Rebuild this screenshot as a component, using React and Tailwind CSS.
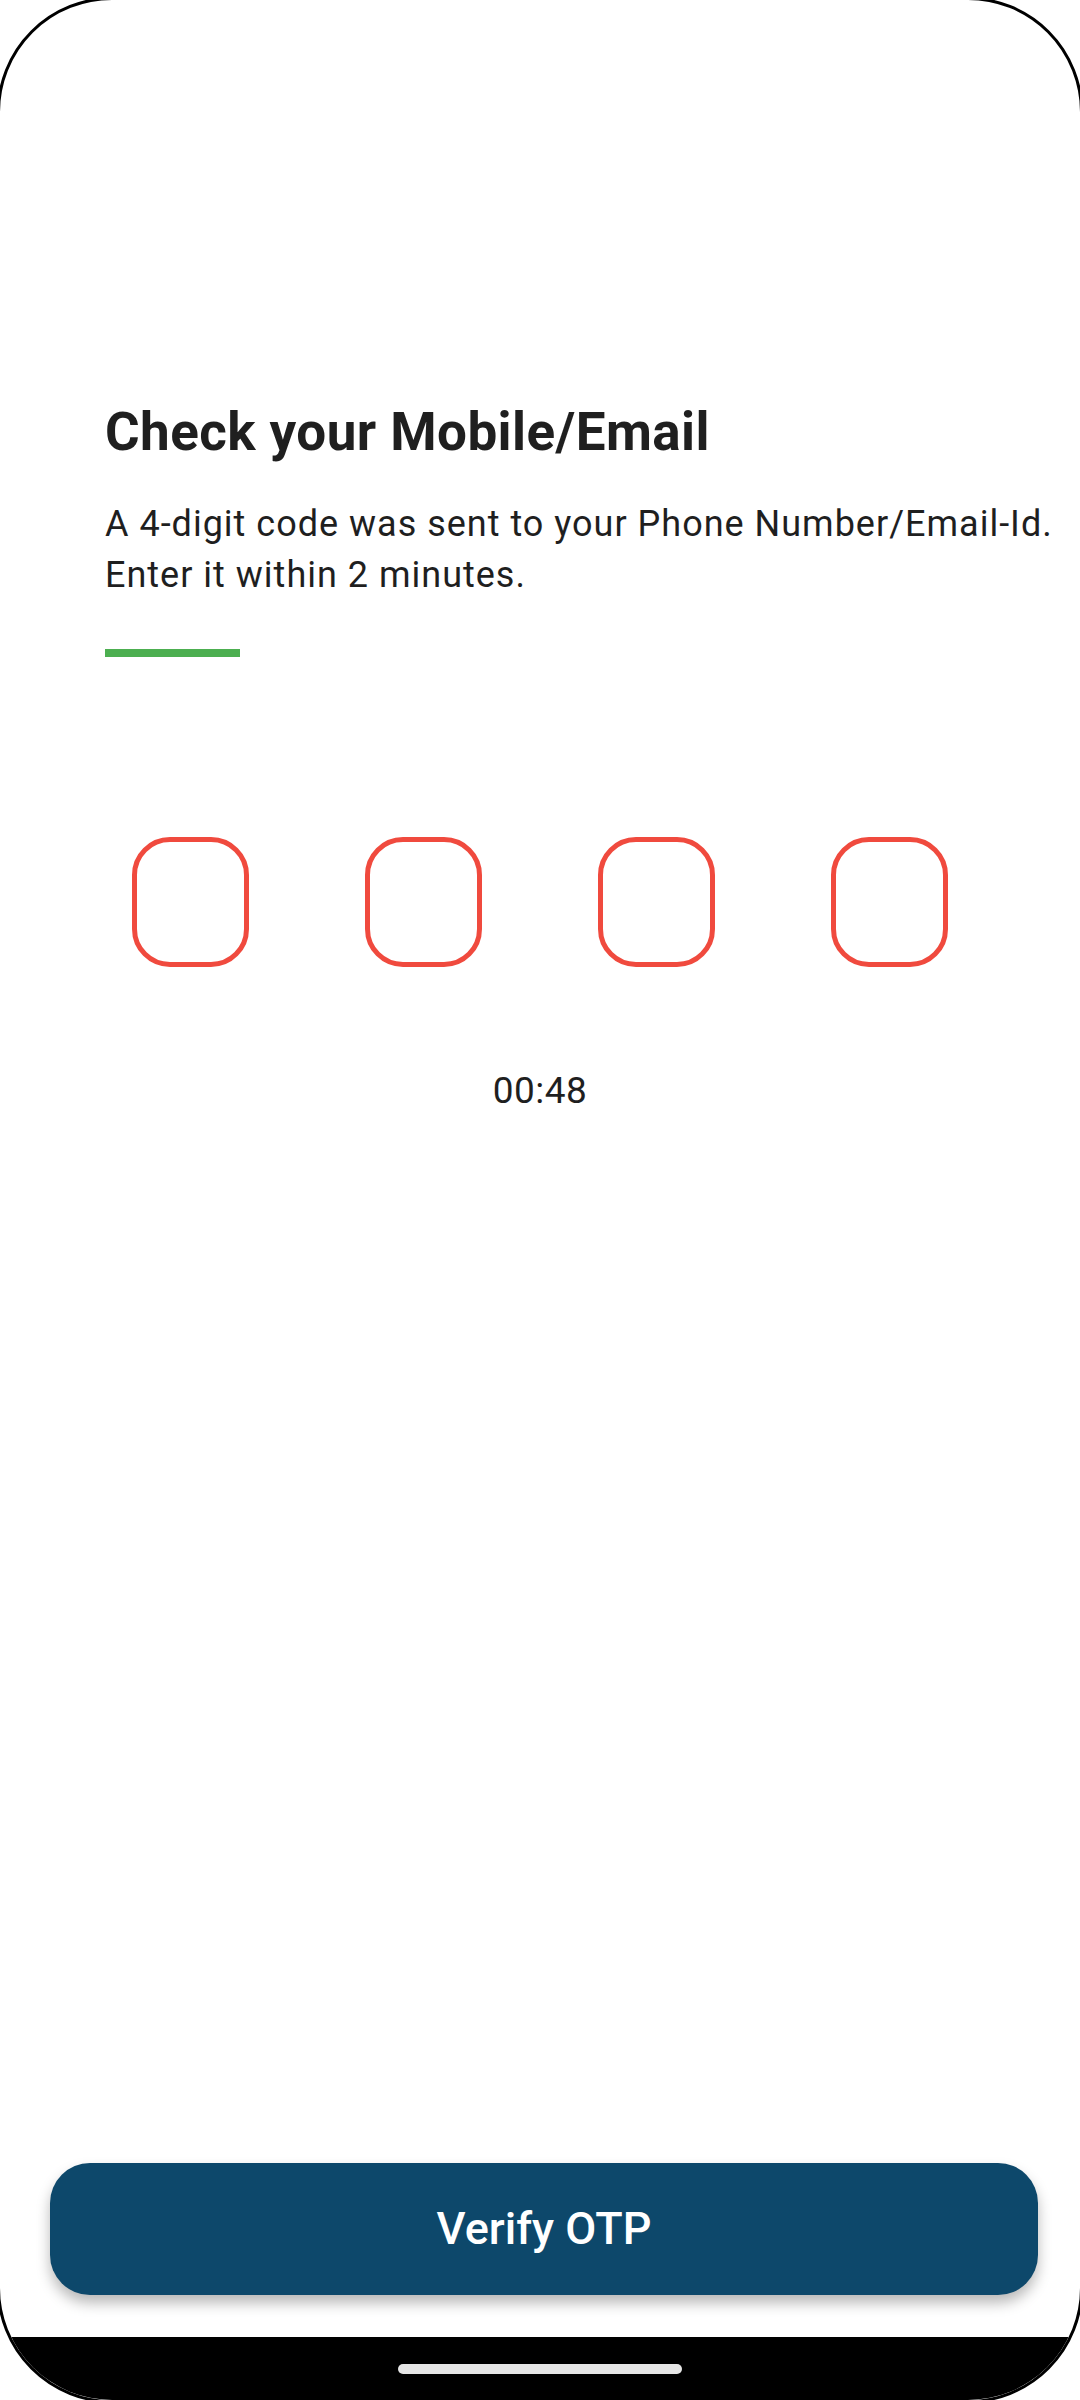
export default function App() {
  return (
    <div className="w-[1080px] h-[2400px] bg-white overflow-hidden font-[family-name:Roboto,sans-serif]">
      <div className="-m-[3px] w-[1086px] h-[2406px] rounded-[115px] border-[3px] border-black overflow-hidden flex flex-col bg-white">
        <div className="flex-1 flex flex-col pt-[402px] px-[105px]">
          <h1 className="text-[53px] leading-[60px] font-bold text-[#1f1f1f] tracking-[0.008em] whitespace-nowrap">
            Check your Mobile/Email
          </h1>
          <p className="mt-[37px] text-[36px] leading-[51px] text-[#1f1f1f] tracking-[1px] whitespace-nowrap">
            A 4-digit code was sent to your Phone Number/Email-Id.
            <br />
            Enter it within 2 minutes.
          </p>
          <div className="mt-[48px] w-[135px] h-[8px] bg-[#4CAF50]" />
          <div className="mt-[180px] flex justify-center gap-[116px] -mx-[105px]">
            {[0, 1, 2, 3].map((i) => (
              <div
                key={i}
                className="w-[117px] h-[130px] rounded-[38px] border-[5px] border-[#F04A3E]"
              />
            ))}
          </div>
          <div className="mt-[98px] text-center text-[37px] leading-[51px] text-[#1f1f1f] tracking-[0.5px] -mx-[105px]">
            00:48
          </div>
        </div>
        <div className="pl-[50px] pr-[42px] pb-[42px]">
          <button className="w-full h-[132px] rounded-[40px] bg-[#0D486B] text-white text-[45px] font-medium shadow-[0_8px_14px_rgba(0,0,0,0.28)]">
            Verify OTP
          </button>
        </div>
        <div className="h-[63px] bg-black flex justify-center pt-[27px]">
          <div className="w-[284px] h-[10px] rounded-full bg-[#e6e6e6]" />
        </div>
      </div>
    </div>
  );
}
